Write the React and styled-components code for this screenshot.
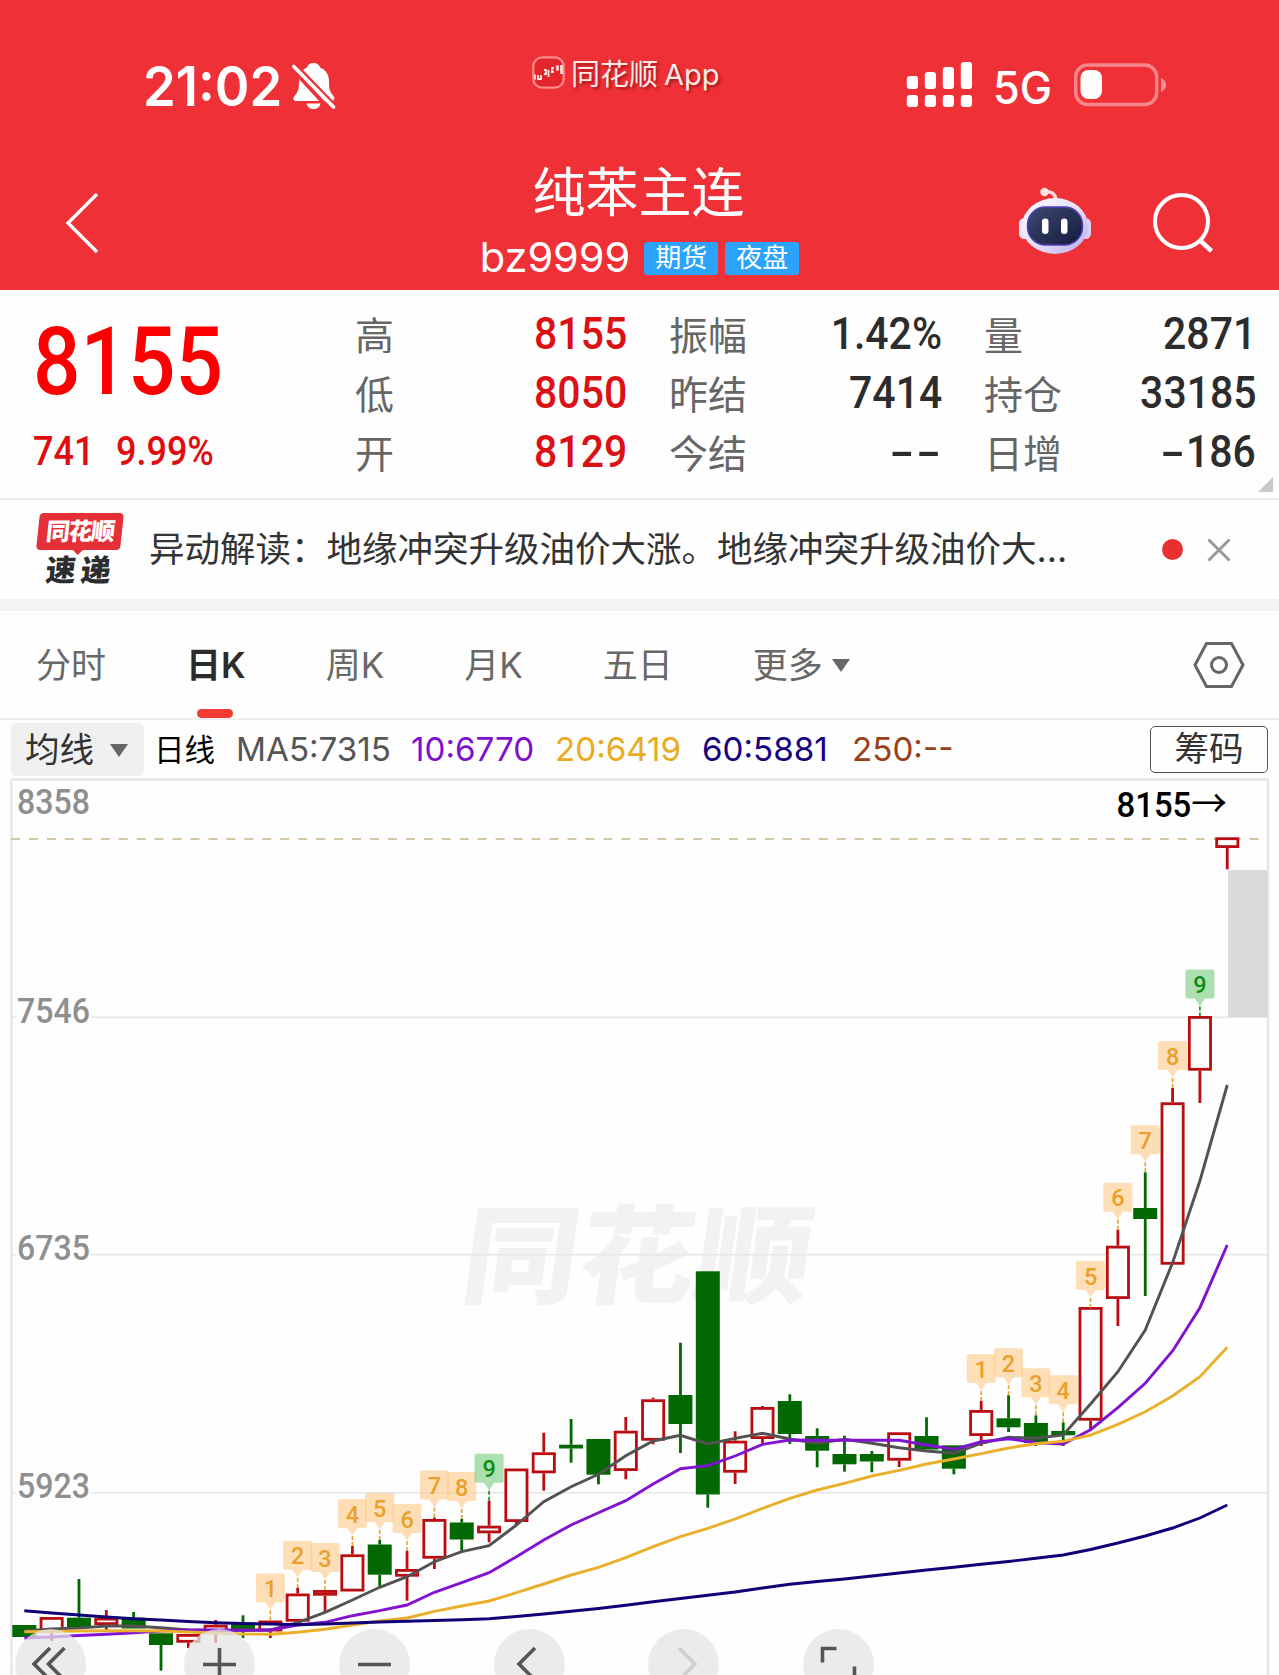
import React from 'react';
import styled, { createGlobalStyle } from 'styled-components';

const GlobalStyle = createGlobalStyle`
  * {
    box-sizing: border-box;
  }
  body {
    margin: 0;
    background: #fefefe;
    font-family: Inter, "Noto Sans CJK SC", sans-serif;
  }
`;

const quotes = [
  [
    { label: '高', value: '8155', up: true },
    { label: '低', value: '8050', up: true },
    { label: '开', value: '8129', up: true },
  ],
  [
    { label: '振幅', value: '1.42%' },
    { label: '昨结', value: '7414' },
    { label: '今结', value: '--' },
  ],
  [
    { label: '量', value: '2871' },
    { label: '持仓', value: '33185' },
    { label: '日增', value: '-186' },
  ],
];

const tabs = ['分时', '日K', '周K', '月K', '五日', '更多'];

const averages = [
  { text: 'MA5:7315', color: '#555555', width: 175 },
  { text: '10:6770', color: '#7f10d0', width: 144 },
  { text: '20:6419', color: '#e9ab20', width: 147 },
  { text: '60:5881', color: '#150080', width: 150 },
  { text: '250:--', color: '#97401a', width: 110 },
];

// [direction, high, top, bottom, low, count]
const candles = [
  ['d', 1625, 1625, 1637, 1637],
  ['u', 1617, 1617, 1632, 1641],
  ['d', 1579, 1617.7, 1627.5, 1628],
  ['u', 1610, 1617.7, 1625, 1630],
  ['d', 1612, 1617.7, 1628.5, 1628.5],
  ['d', 1633, 1633.3, 1645, 1670.6],
  ['u', 1634, 1634, 1642.7, 1648],
  ['u', 1620, 1624.7, 1634, 1643],
  ['d', 1615.3, 1622.7, 1631.7, 1638],
  ['u', 1620.5, 1620.5, 1631.5, 1638, 1],
  ['u', 1587.7, 1593.5, 1621.7, 1626, 2],
  ['u', 1590, 1590, 1595.7, 1612.5, 3],
  ['u', 1546, 1554.3, 1591.5, 1591.5, 4],
  ['d', 1540, 1544.5, 1574.7, 1587, 5],
  ['u', 1551, 1569, 1576.7, 1600.7, 6],
  ['u', 1517.5, 1519, 1558.7, 1569, 7],
  ['d', 1519, 1522.5, 1539.5, 1551.7, 8],
  ['u', 1500.7, 1525.7, 1533.3, 1542.3, 9],
  ['u', 1468.5, 1468.5, 1522, 1526],
  ['u', 1432.7, 1452.3, 1473.3, 1490.7],
  ['d', 1419, 1444.7, 1448.5, 1462.7],
  ['d', 1439, 1439, 1474.7, 1484.3],
  ['u', 1417, 1430.7, 1471, 1479.3],
  ['u', 1397.7, 1399.3, 1440.7, 1444.3],
  ['d', 1342.7, 1395, 1424, 1453],
  ['d', 1271.3, 1271.3, 1494.5, 1507.7],
  ['u', 1431.3, 1440.7, 1472.7, 1484],
  ['u', 1406, 1407, 1439, 1443],
  ['d', 1394.3, 1401, 1434, 1444],
  ['d', 1428.3, 1436, 1450.7, 1467.3],
  ['d', 1435.7, 1454, 1464.3, 1471.7],
  ['d', 1451, 1454, 1461.5, 1472.3],
  ['u', 1432.3, 1432.3, 1460.7, 1467],
  ['d', 1417.3, 1436, 1449.5, 1449.5],
  ['d', 1445.3, 1445.3, 1468.7, 1474.3],
  ['u', 1401, 1410, 1436, 1446, 1],
  ['d', 1395.3, 1418.3, 1427.3, 1432, 2],
  ['d', 1415.3, 1423, 1443, 1446, 3],
  ['d', 1422.3, 1431, 1435.3, 1446, 4],
  ['u', 1308, 1307, 1420.7, 1429, 5],
  ['u', 1229.7, 1245.7, 1299, 1326, 6],
  ['d', 1172.3, 1208, 1219, 1296, 7],
  ['u', 1088, 1102.3, 1264.7, 1264.7, 8],
  ['u', 1016.5, 1016, 1070.7, 1103, 9],
  ['u', 837.3, 837.3, 848, 869.3],
];

const lines = [
  {
    color: '#525252',
    points: [1631, 1629, 1628, 1626, 1626, 1627.7, 1630, 1630.7, 1630, 1630, 1622.7, 1612.3, 1600, 1587.3, 1576.7, 1561.7, 1551.7, 1545.7, 1525, 1501.7, 1486.7, 1474.3, 1455.7, 1441, 1435.3, 1444, 1438.3, 1433.3, 1439, 1443.3, 1439.3, 1443.3, 1447.7, 1451, 1453.3, 1443.3, 1437.3, 1438.3, 1435, 1404, 1371.7, 1330, 1262.7, 1180.7, 1085],
  },
  {
    color: '#8212d2',
    points: [1638, 1637, 1635.5, 1634.3, 1632.7, 1631, 1630, 1630, 1630.3, 1630, 1625, 1622.3, 1615.7, 1610.7, 1605, 1592.3, 1582.7, 1572.7, 1556.7, 1540, 1525, 1512.7, 1500.7, 1484, 1468.7, 1465.7, 1456, 1444.3, 1440, 1440.3, 1440.3, 1440.3, 1440.3, 1445, 1449.3, 1441.7, 1438.7, 1442.7, 1444, 1429.7, 1407.7, 1383.3, 1351, 1307.7, 1245],
  },
  {
    color: '#eab02c',
    points: [1631.7, 1631.5, 1631, 1630.7, 1630.7, 1631, 1632, 1633, 1634, 1634.3, 1632.3, 1629.3, 1625, 1621, 1618, 1611.3, 1606, 1601, 1592.7, 1584, 1575, 1567.3, 1557.7, 1546.7, 1536.7, 1528.3, 1519, 1508.3, 1498.3, 1490, 1483.3, 1476, 1470.3, 1464, 1459, 1453.7, 1448, 1443.7, 1441.3, 1435, 1424.3, 1411.7, 1396, 1376.7, 1347.3],
  },
  {
    color: '#0f0078',
    points: [1610.7, 1613, 1615, 1617, 1618.7, 1620, 1621.5, 1622.7, 1623.5, 1624, 1624.7, 1624, 1623, 1622, 1621.3, 1620.5, 1619.7, 1618.7, 1616.5, 1614, 1611.3, 1608.5, 1605.3, 1601.8, 1598.5, 1595.3, 1592, 1588, 1584.3, 1581.5, 1579, 1576, 1573, 1570, 1567.3, 1564.3, 1561.5, 1558.3, 1555, 1549.5, 1543, 1536, 1528, 1518, 1505],
  },
];

const candleX = (i) => 24.3 + i * 27.34;

const StatusIcons = () => (
  <svg width="262" height="50" viewBox="907 60 262 50" fill="#fff">
    {[76, 72, 67, 62].map((top, i) => (
      <g key={top}>
        <rect x={907.8 + i * 18} y={top} width="11.2" height={89 - top} rx="3" />
        <rect x={907.8 + i * 18} y="95" width="11.2" height="12" rx="3" />
      </g>
    ))}
    <rect x="1076.7" y="65" width="81" height="39.5" rx="12" fill="none" stroke="#fff" strokeOpacity="0.42" strokeWidth="3.4" />
    <rect x="1081.5" y="70" width="21.5" height="29" rx="8" />
    <path d="M1162 78c3.500 1.500 5 4 5 7s-1.500 5.500-5 7z" fillOpacity="0.45" />
  </svg>
);

const BellOff = () => (
  <svg width="44" height="48" viewBox="0 0 44 48">
    <path d="M21.500 1c3.500 0 6 2 6.500 4.500 6 2.500 9 7.500 9 14 0 9 1.500 11 4.500 14.500 2 2.500.5 5-2 5H4c-2.500 0-3.500-2.500-1.500-5C5.500 30.500 7 28 7 19.500 7 13 9.500 8 15 5.500 15.500 3 18 1 21.500 1z" fill="#fff" />
    <path d="M14.500 41.500h14c-.5 3.500-3.500 5.500-7 5.500s-6.500-2-7-5.500z" fill="#fff" />
    <path d="M-2 4.500L39 49M2 1.500L45 46" stroke="#f03037" strokeWidth="4" />
    <path d="M1.800 4.500L41.500 45" stroke="#fff" strokeWidth="3.600" strokeLinecap="round" />
  </svg>
);

const AppIcon = () => (
  <svg width="33" height="33" viewBox="0 0 33 33">
    <rect x="1.300" y="1.300" width="30.400" height="30.400" rx="9" fill="#e5252c" stroke="#ff8a88" strokeWidth="2.200" />
    <path d="M3 18.500v5M6 19v4h3v-4M12 14h2v4h-2M16.500 14v7M22 12h-2v4h2" stroke="#ffe9e6" strokeWidth="1.800" fill="none" />
    <path d="M25.500 9.500v5M29.500 9v9" stroke="#ffe9e6" strokeWidth="2.600" fill="none" />
  </svg>
);

const Robot = () => (
  <svg width="74" height="68" viewBox="0 0 74 68">
    <defs>
      <linearGradient id="shell" x1="0" y1="0" x2="1" y2="1">
        <stop offset="0" stopColor="#ffffff" />
        <stop offset="0.55" stopColor="#e4dcf8" />
        <stop offset="1" stopColor="#b9a8ec" />
      </linearGradient>
      <linearGradient id="visor" x1="0" y1="0" x2="1" y2="1">
        <stop offset="0" stopColor="#3d4a72" />
        <stop offset="1" stopColor="#141a3c" />
      </linearGradient>
    </defs>
    <path d="M27 5c6-1 10 1 11 8" stroke="#ffd9dc" strokeWidth="3.500" fill="none" />
    <circle cx="26.500" cy="5" r="4.200" fill="#ffe3e5" />
    <rect x="1" y="31" width="12" height="21" rx="5.500" fill="#e9e3fa" />
    <rect x="61" y="31" width="12" height="21" rx="5.500" fill="#d9cff6" />
    <ellipse cx="37" cy="39" rx="33" ry="28" fill="url(#shell)" />
    <rect x="9.500" y="20" width="55" height="38" rx="18" fill="url(#visor)" stroke="#5040b8" strokeWidth="1.500" />
    <rect x="24" y="31.500" width="6.500" height="15.500" rx="3.200" fill="#fff" />
    <rect x="43" y="31.500" width="6.500" height="15.500" rx="3.200" fill="#fff" />
  </svg>
);

const Candle = ({ index, data }) => {
  const [dir, high, top, bottom, low] = data;
  const x = candleX(index);
  const color = dir === 'u' ? '#b90d12' : '#026902';
  return (
    <g>
      {high < top && <path d={`M${x} ${high}V${top}`} stroke={color} strokeWidth="2.800" />}
      {low > bottom && <path d={`M${x} ${bottom}V${low}`} stroke={color} strokeWidth="2.800" />}
      {dir === 'u' ? (
        <rect x={x - 10.600} y={top + 1.400} width="21.200" height={bottom - top - 2.800} fill="#fefefe" stroke={color} strokeWidth="2.800" />
      ) : (
        <rect x={x - 12} y={top} width="24" height={bottom - top} fill={color} />
      )}
    </g>
  );
};

const Badge = ({ index, high, count }) => {
  const x = candleX(index);
  const y = high - 47;
  const nine = count === 9;
  const text = nine ? '#0c8c14' : '#e9a02c';
  return (
    <g>
      <path
        d={`M${x - 12.5} ${y}h25a2 2 0 0 1 2 2v25a2 2 0 0 1-2 2h-7.500l-5 7.500l-5-7.500h-7.500a2 2 0 0 1-2-2v-25a2 2 0 0 1 2-2z`}
        fill={nine ? '#74cc7c' : '#fdc886'}
        fillOpacity="0.6"
      />
      <path d={`M${x} ${y + 37}V${high}`} stroke={text} strokeWidth="1.600" strokeDasharray="4 2" />
      <ChartText x={x} y={y + 23.5} $size={23.5} $color={text} $weight={500} textAnchor="middle">
        {count}
      </ChartText>
    </g>
  );
};

const Chart = () => (
  <svg width="1279" height="897" viewBox="0 778 1279 897">
    <Watermark transform="translate(458 1295) skewX(-8)" textLength="349" lengthAdjust="spacingAndGlyphs">同花顺</Watermark>
    <path d="M11.500 1675V779.500H1268V1675" fill="none" stroke="#e6e6e6" strokeWidth="2.400" />
    <path d="M12 1017.300H1268M12 1254.700H1268M12 1492.700H1268" stroke="#e6e6e6" strokeWidth="1.600" />
    <rect x="1228" y="870" width="39.500" height="147" fill="#dadada" />
    <path d="M11 839H1268" stroke="#c9b48c" strokeWidth="1.600" strokeDasharray="9 8.950" />
    {candles.map((data, i) => (
      <Candle key={i} index={i} data={data} />
    ))}
    {lines.map((line) => (
      <polyline
        key={line.color}
        points={line.points.map((y, i) => `${candleX(i)},${y}`).join(' ')}
        fill="none"
        stroke={line.color}
        strokeWidth="2.900"
      />
    ))}
    {candles.map((data, i) => data[5] && <Badge key={i} index={i} high={data[1]} count={data[5]} />)}
    {[['8358', 814.3], ['7546', 1022.5], ['6735', 1260], ['5923', 1497.8]].map(([price, y]) => (
      <g key={price}>
        <rect x="16" y={y - 27} width="75" height="30" fill="#fefefe" />
        <ChartText x="17" y={y} $size={34.5} $color="#8f8f8f" $weight={500} textLength="73" lengthAdjust="spacingAndGlyphs">{price}</ChartText>
      </g>
    ))}
    <ChartText x="1116.500" y="817.300" $size={35} $color="#000" $weight={500} textLength="110.500" lengthAdjust="spacingAndGlyphs">
      8155<Arrow>→</Arrow>
    </ChartText>
  </svg>
);

const App = () => {
  return (
    <Page>
      <GlobalStyle />
      <Header>
        <StatusBar>
          <Clock>
            <Time>21:02</Time>
            <BellOff />
          </Clock>
          <AppMark>
            <AppIcon />
            <span>同花顺<b>App</b></span>
          </AppMark>
          <Signals>
            <StatusIcons />
            <Network>5G</Network>
          </Signals>
        </StatusBar>
        <NavBar>
          <svg width="36" height="62" viewBox="0 0 36 62">
            <path d="M33 2L4 31L33 60" fill="none" stroke="#fff" strokeWidth="3.400" />
          </svg>
          <Titles>
            <Title>纯苯主连</Title>
            <SubTitle>
              <Code>bz9999</Code>
              <Tag>期货</Tag>
              <Tag>夜盘</Tag>
            </SubTitle>
          </Titles>
          <Actions>
            <Robot />
            <svg width="62" height="62" viewBox="0 0 62 62" fill="none" stroke="#fff" strokeWidth="4">
              <circle cx="28.500" cy="30.500" r="26.500" />
              <path d="M47 49.500L58.500 60" strokeWidth="4.500" />
            </svg>
          </Actions>
        </NavBar>
      </Header>

      <Quote>
        <Latest>
          <Price>8155</Price>
          <Change><span>741</span><span>9.99%</span></Change>
        </Latest>
        {quotes.map((column, i) => (
          <QuoteColumn key={i}>
            {column.map(({ label, value, up }) => (
              <QuoteRow key={label}>
                <Label>{label}</Label>
                <Value $up={up}>
                  {value.split('').map((c, n) => (c === '-' ? <Dash key={n}>-</Dash> : c))}
                </Value>
              </QuoteRow>
            ))}
          </QuoteColumn>
        ))}
        <Corner />
      </Quote>

      <News>
        <NewsLogo>
          <LogoTop><span>同花顺</span></LogoTop>
          <LogoBottom>速递</LogoBottom>
        </NewsLogo>
        <NewsText>异动解读：地缘冲突升级油价大涨。地缘冲突升级油价大...</NewsText>
        <Dot />
        <svg width="24" height="24" viewBox="0 0 24 24">
          <path d="M1.500 1.500L22.500 22.500M22.500 1.500L1.500 22.500" stroke="#999" strokeWidth="3" />
        </svg>
      </News>

      <Tabs>
        {tabs.map((tab) => (
          <Tab key={tab} $active={tab === '日K'}>
            {tab}
            {tab === '更多' && <Caret />}
          </Tab>
        ))}
        <Setting width="52" height="48" viewBox="0 0 52 48" fill="none" stroke="#666" strokeWidth="3">
          <path d="M13.500 2.500H38.500L50 24L38.500 45.500H13.500L2 24Z" />
          <circle cx="26" cy="24" r="7.500" />
        </Setting>
      </Tabs>

      <MaBar>
        <MaButton>均线<Caret /></MaButton>
        <Period>日线</Period>
        {averages.map(({ text, color, width }) => (
          <Average key={text} $color={color} $width={width}>{text}</Average>
        ))}
        <ChipButton>筹码</ChipButton>
      </MaBar>

      <ChartArea>
        <Chart />
        <Tools>
          <Tool $gap={98}>
            <path d="M35 19L19 35L35 51M49.500 19L33.500 35L49.500 51" />
          </Tool>
          <Tool><path d="M19 35.500H52M35.500 19V52" /></Tool>
          <Tool><path d="M19 35.500H52" /></Tool>
          <Tool><path d="M41 19L25 35L41 51" /></Tool>
          <Tool $disabled><path d="M31 19L47 35L31 51" /></Tool>
          <Tool><path d="M33.500 19.500H19.500V33.500M51.500 37.500V51.500H37.500" /></Tool>
        </Tools>
      </ChartArea>
    </Page>
  );
};

const Page = styled.div`
  width: 1279px;
  height: 1675px;
  overflow: hidden;
  background: #fefefe;
`;

const Header = styled.header`
  height: 290px;
  background: #f03037;
  color: #fff;
`;

const StatusBar = styled.div`
  display: grid;
  grid-template-columns: 388px 374px 1fr;
  height: 150px;
  padding-left: 144px;
`;

const Clock = styled.div`
  display: flex;
  gap: 14px;
  padding-top: 62px;
`;

const Time = styled.div`
  width: 135px;
  height: 48px;
  margin-left: -1px;
  font-size: 54.5px;
  font-weight: 600;
  line-height: 48px;
  white-space: nowrap;
  transform: scaleX(0.965);
  transform-origin: left;
`;

const AppMark = styled.div`
  display: flex;
  gap: 6px;
  padding-top: 56px;
  color: #ffeae6;
  font-size: 29px;
  line-height: 38px;
  white-space: nowrap;
  text-shadow: 2px 2px 3px rgb(90 0 0 / 55%);

  b {
    margin-left: 6px;
    font-size: 29px;
    font-weight: 400;
  }
`;

const Signals = styled.div`
  display: grid;
  height: 50px;
  margin-top: 60px;

  > * {
    grid-area: 1 / 1;
  }
`;

const Network = styled.div`
  margin-left: 87px;
  font-size: 45px;
  font-weight: 500;
  line-height: 55px;
  transform: scaleX(0.96);
  transform-origin: left;
`;

const NavBar = styled.div`
  display: grid;
  grid-template-columns: 300px 1fr 300px;
  align-items: start;
  height: 140px;
  padding: 0 64px;

  > svg {
    margin-top: 42px;
  }
`;

const Titles = styled.div`
  display: flex;
  flex-direction: column;
  align-items: center;
`;

const Title = styled.h1`
  margin: 15px 2px 0 0;
  font-size: 53px;
  font-weight: 400;
  line-height: 56px;
`;

const SubTitle = styled.div`
  display: flex;
  align-items: center;
  gap: 7px;
  height: 34px;
  margin-top: 20px;
`;

const Code = styled.span`
  margin: -2px 7px 0 0;
  font-size: 41.5px;
  line-height: 34px;
`;

const Tag = styled.span`
  width: 74px;
  height: 33px;
  border-radius: 3px;
  background: #2ba2fb;
  font-size: 26px;
  line-height: 32px;
  text-align: center;
`;

const Actions = styled.div`
  display: flex;
  justify-content: flex-end;
  gap: 61px;
  padding-top: 37px;

  svg:last-child {
    margin-top: 4px;
  }
`;

const Quote = styled.section`
  position: relative;
  display: grid;
  grid-template-columns: 277px 272px 273px 272px;
  column-gap: 42px;
  height: 210px;
  padding: 13px 0 0 36px;
  border-bottom: 2px solid #ececec;
`;

const Latest = styled.div`
  font-family: Roboto, sans-serif;
`;

const Price = styled.div`
  margin: 18px 0 0 -3px;
  color: #fb0000;
  font-size: 94.5px;
  font-weight: 500;
  line-height: 82px;
  transform: scaleX(0.885);
  transform-origin: left;
`;

const Change = styled.div`
  display: flex;
  gap: 24px;
  margin: 29px 0 0 -3px;
  color: #e10c10;
  font-size: 40px;
  font-weight: 500;
  line-height: 40px;
  transform: scaleX(0.9);
  transform-origin: left;
`;

const QuoteColumn = styled.div`
  display: flex;
  flex-direction: column;
`;

const QuoteRow = styled.div`
  display: flex;
  justify-content: space-between;
  height: 59px;
`;

const Label = styled.span`
  color: #666;
  font-size: 39px;
  line-height: 65px;
`;

const Value = styled.span`
  color: ${({ $up }) => ($up ? '#db1115' : '#2c2c2c')};
  font-family: Roboto, sans-serif;
  font-size: 44.5px;
  font-weight: 500;
  line-height: 62px;
  transform: scaleX(0.92);
  transform-origin: right;
`;

const Dash = styled.span`
  display: inline-block;
  width: 29px;
  text-align: center;
  transform: scaleX(1.75);
`;

const Corner = styled.i`
  position: absolute;
  right: 6px;
  bottom: 6px;
  border-bottom: 15px solid #c9c9c9;
  border-left: 15px solid transparent;
`;

const News = styled.section`
  display: flex;
  align-items: center;
  height: 111px;
  padding-left: 37px;
  border-bottom: 12px solid #f3f3f3;
`;

const NewsLogo = styled.div`
  width: 112px;
  height: 74px;
`;

const LogoTop = styled.div`
  position: relative;
  width: 84px;
  height: 37px;
  margin-left: 1px;
  border-radius: 4px;
  background: #e53037;
  color: #fff;
  font-size: 24px;
  font-weight: 800;
  line-height: 37px;
  text-align: center;
  letter-spacing: -1.5px;
  transform: skewX(-6deg);

  &::after {
    content: '';
    position: absolute;
    top: 36px;
    left: 36px;
    border: 6px solid transparent;
    border-top-color: #e53037;
  }
`;

const LogoBottom = styled.div`
  margin: 4px 0 0 9px;
  color: #2b2d2e;
  font-size: 30px;
  font-weight: 900;
  line-height: 32px;
  letter-spacing: 5px;
  transform: skewX(-6deg);
`;

const NewsText = styled.div`
  width: 1013px;
  color: #333;
  font-size: 35.5px;
  line-height: 45px;
  white-space: nowrap;
`;

const Dot = styled.i`
  width: 21px;
  height: 21px;
  margin-right: 24px;
  border-radius: 50%;
  background: #e8302f;
`;

const Caret = styled.i`
  border-top: 13px solid #666;
  border-right: 9px solid transparent;
  border-left: 9px solid transparent;
`;

const Tabs = styled.nav`
  display: flex;
  gap: 80px;
  height: 109px;
  padding: 0 34px 0 36px;
  border-bottom: 2px solid #eee;
`;

const Tab = styled.div`
  position: relative;
  display: flex;
  align-items: center;
  gap: 9px;
  padding-bottom: 5px;
  color: ${({ $active }) => ($active ? '#2c2c2c' : '#686868')};
  font-size: 35px;
  font-weight: ${({ $active }) => ($active ? 600 : 400)};

  ${Caret} {
    margin-top: 6px;
  }

  &::after {
    content: '';
    display: ${({ $active }) => ($active ? 'block' : 'none')};
    position: absolute;
    bottom: 0;
    left: 11px;
    width: 36px;
    height: 9px;
    border-radius: 5px;
    background: #f43a31;
  }
`;

const Setting = styled.svg`
  margin: 30px 0 0 auto;
`;

const MaBar = styled.div`
  display: flex;
  align-items: center;
  height: 58px;
  padding: 0 11px;
`;

const MaButton = styled.div`
  display: flex;
  align-items: center;
  justify-content: space-between;
  width: 133px;
  height: 53px;
  padding: 2px 16px 0 14px;
  border-radius: 5px;
  background: #f0f0f0;
  color: #333;
  font-size: 34.5px;
  line-height: 50px;
`;

const Period = styled.div`
  width: 82px;
  margin: -3px 0 0 10px;
  color: #000;
  font-size: 30.5px;
`;

const Average = styled.div`
  width: ${({ $width }) => $width}px;
  color: ${({ $color }) => $color};
  font-size: 33.2px;
  line-height: 42px;
  white-space: nowrap;
`;

const ChipButton = styled.div`
  width: 118px;
  height: 47px;
  margin-left: auto;
  border: 1.5px solid #555;
  border-radius: 5px;
  color: #333;
  font-size: 34.5px;
  line-height: 44px;
  text-align: center;
`;

const ChartArea = styled.div`
  position: relative;
  height: 897px;

  > svg {
    display: block;
  }
`;

const Tools = styled.div`
  position: absolute;
  bottom: -25px;
  left: 15px;
  display: flex;
`;

const Tool = styled.svg.attrs({ viewBox: '0 0 71 71' })`
  width: 71px;
  height: 71px;
  margin-right: ${({ $gap }) => $gap || 83.8}px;
  border-radius: 50%;
  background: rgb(228 228 228 / 75%);
  fill: none;
  stroke: ${({ $disabled }) => ($disabled ? '#cfcfcf' : '#555')};
  stroke-width: 3.6;
`;

const ChartText = styled.text`
  fill: ${({ $color }) => $color};
  font-family: Roboto, sans-serif;
  font-size: ${({ $size }) => $size}px;
  font-weight: ${({ $weight }) => $weight};
`;

const Arrow = styled.tspan`
  font-family: "Noto Sans CJK SC", sans-serif;
  font-size: 38px;
  font-weight: 400;
`;

const Watermark = styled.text`
  fill: #f2f2f2;
  font-family: "Noto Sans CJK SC", sans-serif;
  font-size: 107px;
  font-weight: 900;
`;

export default App;
